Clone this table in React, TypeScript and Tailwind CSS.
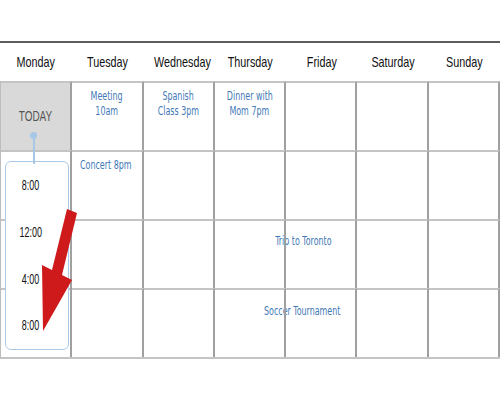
const days = ["Monday", "Tuesday", "Wednesday", "Thursday", "Friday", "Saturday", "Sunday"];

// events per row (Tuesday..Sunday), index 0 = Tuesday
const rows: (string[] | null)[][] = [
  [["Meeting", "10am"], ["Spanish", "Class 3pm"], ["Dinner with", "Mom 7pm"], null, null, null],
];

const cell = "border-t-2 border-r-2 border-t-[#c4c4c4] border-r-[#a0a0a0]";
const ink = "whitespace-nowrap font-['DejaVu_Sans_Condensed','Liberation_Sans_Narrow',sans-serif] text-[#4279b6]";

function Squish({ children, k = "scale-x-[0.72]" }: { children: React.ReactNode; k?: string }) {
  return <span className={`inline-block whitespace-nowrap ${k}`}>{children}</span>;
}

export default function App() {
  return (
    <div className="relative h-[400px] w-[500px] overflow-hidden bg-white pt-[41px] font-['Liberation_Sans',Arial,sans-serif]">
      <div className="border-t-2 border-[#5c5c5c]">
        <div className="grid h-[38px] grid-cols-7 items-center text-center text-[15px] text-[#111]">
          {days.map((d) => (
            <div key={d}>
              <Squish>{d}</Squish>
            </div>
          ))}
        </div>

        <div className="relative isolate grid grid-cols-7 grid-rows-[69px_69px_69px_69px] border-b-2 border-l border-b-[#c4c4c4] border-l-[#bdbdbd]">
          {/* Monday / today */}
          <div className={`${cell} relative flex items-center justify-center bg-[#d9d9d9] text-[14px] text-[#555]`}>
            <Squish k="scale-x-[0.71]">TODAY</Squish>
            <span className="absolute left-[29px] top-[49px] z-10 h-[7px] w-[7px] rounded-full bg-[#a6c8e6]" />
            <span className="absolute left-[32px] top-[53px] z-10 h-[28px] w-[1.5px] bg-[#a6c8e6]" />
          </div>

          {rows[0].map((ev, i) => (
            <div key={`r0-${i}`} className={`${cell} pt-[5px] text-center text-[13px] leading-[15px] ${ink}`}>
              {ev?.map((l) => (
                <div key={l}>
                  <Squish k="scale-x-[0.68]">{l}</Squish>
                </div>
              ))}
            </div>
          ))}

          <div className={`${cell} relative row-span-3 pb-[6px] pl-[4px] pr-[1px] pt-[9px]`}>
            {/* row lines peeking out beside the time box */}
            <span className="absolute left-0 top-[67px] h-[2px] w-full bg-[#c4c4c4]" />
            <span className="absolute left-0 top-[136px] h-[2px] w-full bg-[#c4c4c4]" />
            <div className="relative flex h-[189px] flex-col rounded-[6px] border-[1.5px] border-[#a9cae7] bg-white pr-[13px] text-center text-[15px] text-[#111]">
              {["8:00", "12:00", "4:00", "8:00"].map((t, i) => (
                <div key={i} className="flex h-[47px] items-center justify-center">
                  <Squish k="scale-x-[0.6]">{t}</Squish>
                </div>
              ))}
            </div>
          </div>

          <div className={`${cell} pl-[8px] pt-[5px] text-[13px] leading-[15px] ${ink}`}>
            <Squish k="scale-x-[0.68] origin-left">Concert 8pm</Squish>
          </div>
          {Array.from({ length: 5 + 12 }).map((_, i) => (
            <div key={`e-${i}`} className={cell} />
          ))}

          <div className={`absolute -z-10 left-[236px] top-[151px] w-[132px] text-center text-[13px] leading-[18px] ${ink}`}>
            <Squish k="scale-x-[0.68]">Trip to Toronto</Squish>
          </div>
          <div className={`absolute -z-10 left-[226px] top-[221px] w-[150px] text-center text-[13px] leading-[18px] ${ink}`}>
            <Squish k="scale-x-[0.68]">Soccer Tournament</Squish>
          </div>
        </div>
      </div>

      <svg className="pointer-events-none absolute left-0 top-0" width="500" height="400" viewBox="0 0 500 400">
        <polygon points="67,209 77,213 62,275 72,280 43,331 42,265 52,270" fill="#cf1a1c" />
      </svg>
    </div>
  );
}
